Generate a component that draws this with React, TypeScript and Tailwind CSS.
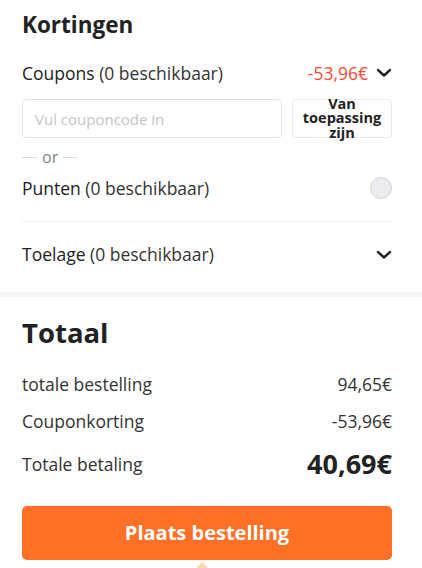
import React from "react";

const Chevron = () => (
  <svg width="16" height="10" viewBox="0 0 16 10" fill="none">
    <path d="M2 2l6 5.5L14 2" stroke="#222" strokeWidth="2.4" strokeLinecap="round" strokeLinejoin="round" />
  </svg>
);

export default function App() {
  return (
    <div className="w-[422px] h-[568px] overflow-hidden bg-white text-[#333]" style={{ fontFamily: '"Open Sans", sans-serif' }}>
      <div className="pl-[22px] pr-[30px] pt-[8px]">
        <h2 className="text-[22.5px] font-bold text-[#222] leading-[34px]">Kortingen</h2>
        <div className="mt-[14px] flex items-center justify-between h-[34px]">
          <div className="text-[17.5px]">
            <span className="text-[#222]">Coupons</span> <span className="text-[#333]">(0 beschikbaar)</span>
          </div>
          <div className="flex items-center gap-[8px]">
            <span className="text-[17.5px] text-[#ff4a33]">-53,96€</span>
            <Chevron />
          </div>
        </div>
        <div className="mt-[9px] flex gap-[10px]">
          <input
            className="w-[260px] h-[39px] border border-[#e3e3e3] rounded-[4px] px-[12px] text-[15px] placeholder:text-[#c4c4c4] outline-none"
            placeholder="Vul couponcode in"
          />
          <button className="w-[100px] h-[39px] border border-[#ececec] rounded-[4px] flex items-center justify-center text-[14.5px] font-bold text-[#222] leading-[14.5px] overflow-visible">
            Van<br />toepassing<br />zijn
          </button>
        </div>
        <div className="mt-[8px] flex items-center gap-[5px] h-[22px]">
          <span className="w-[15px] h-px bg-[#dcdcdc]" />
          <span className="text-[16px] text-[#7a8694]">or</span>
          <span className="w-[14px] h-px bg-[#dcdcdc]" />
        </div>
        <div className="flex items-center justify-between h-[32px] mt-[4px]">
          <div className="text-[17.5px]">
            <span className="text-[#222]">Punten</span> <span>(0 beschikbaar)</span>
          </div>
          <span className="w-[22px] h-[22px] rounded-full bg-[#ebebf0] border border-[#d4d4d8]" />
        </div>
        <div className="mt-[17px] h-px bg-[#eeeeee]" />
        <div className="flex items-center justify-between h-[65px]">
          <div className="text-[17.5px]">
            <span className="text-[#222]">Toelage</span> <span>(0 beschikbaar)</span>
          </div>
          <Chevron />
        </div>
      </div>
      <div className="mt-[5px] h-[5px] bg-[#f4f5f7]" />
      <div className="pl-[22px] pr-[30px] pt-[18px]">
        <h2 className="text-[27.5px] font-bold text-[#222] leading-[36px]">Totaal</h2>
        <div className="mt-[15px] flex items-center justify-between h-[37px] text-[17.5px]">
          <span>totale bestelling</span>
          <span>94,65€</span>
        </div>
        <div className="flex items-center justify-between h-[36px] text-[17.5px]">
          <span>Couponkorting</span>
          <span>-53,96€</span>
        </div>
        <div className="mt-[5px] flex items-center justify-between h-[40px]">
          <span className="text-[17.5px]">Totale betaling</span>
          <span className="text-[27px] font-bold text-[#222]">40,69€</span>
        </div>
        <button className="mt-[22px] w-full h-[54px] rounded-[5px] bg-[#ff6f26] text-white text-[20px] font-bold">
          Plaats bestelling
        </button>
        <div className="flex justify-center">
          <div className="ml-[-10px] mt-[2px] w-0 h-0 border-l-[6px] border-r-[6px] border-b-[6px] border-l-transparent border-r-transparent border-b-[#fcd9a8]" />
        </div>
      </div>
    </div>
  );
}
